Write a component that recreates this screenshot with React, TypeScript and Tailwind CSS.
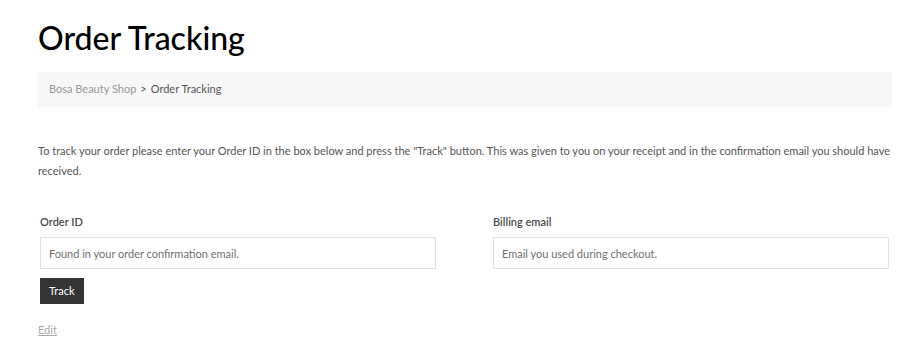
export default function App() {
  return (
    <div className="min-h-screen bg-white font-['Lato',sans-serif] text-[#555]">
      <div className="pl-[38px] pr-[18px] pt-[18px]">
        <h1 className="text-[32px] leading-[40px] font-medium text-black">
          Order Tracking
        </h1>

        {/* breadcrumb */}
        <div className="mt-[14px] h-[35px] bg-[#f7f7f7] px-[11px] flex items-center text-[11px]">
          <span className="text-[#999]">Bosa Beauty Shop</span>
          <span className="mx-[4px] text-[#555]">&gt;</span>
          <span className="text-[#555]">Order Tracking</span>
        </div>

        <p className="mt-[34px] text-[11px] leading-[20px] text-[#555]">
          To track your order please enter your Order ID in the box below and
          press the "Track" button. This was given to you on your receipt and in
          the confirmation email you should have received.
        </p>

        <form className="ml-[2px] mr-[3px] mt-[34px]">
          <div className="grid grid-cols-2 gap-x-[57px]">
            <div>
              <label className="block text-[11px] font-semibold text-[#4a4a4a] leading-[14px]">
                Order ID
              </label>
              <input
                className="mt-[8px] w-full h-[32px] border border-[#e2e2e2] px-[8px] text-[11px] outline-none placeholder:text-[#707070]"
                placeholder="Found in your order confirmation email."
              />
            </div>
            <div>
              <label className="block text-[11px] font-semibold text-[#4a4a4a] leading-[14px]">
                Billing email
              </label>
              <input
                className="mt-[8px] w-full h-[32px] border border-[#e2e2e2] px-[8px] text-[11px] outline-none placeholder:text-[#707070]"
                placeholder="Email you used during checkout."
              />
            </div>
          </div>
          <button
            type="button"
            className="mt-[9px] h-[26px] px-[9px] bg-[#333] text-white text-[11px]"
          >
            Track
          </button>
        </form>

        <a href="#" className="mt-[18px] inline-block text-[11px] text-[#aaa] underline">
          Edit
        </a>
      </div>
    </div>
  );
}
